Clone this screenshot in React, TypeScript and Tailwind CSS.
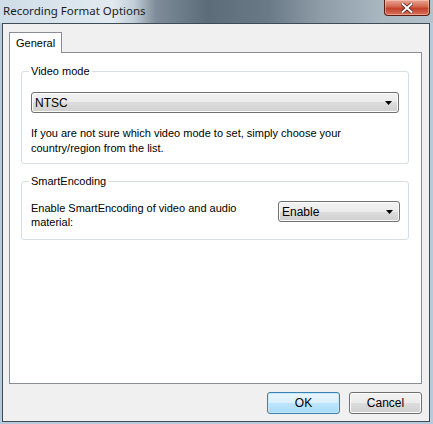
const font = { fontFamily: '"Liberation Sans", Arial, sans-serif' };

function Combo({ value, className }: { value: string; className: string }) {
  return (
    <div
      className={`h-[21px] flex items-center justify-between rounded-[3px] border border-[#707070] pl-[3px] pr-[6px] text-[12px] text-black bg-[linear-gradient(to_bottom,#f2f2f2_0%,#ebebeb_50%,#dddddd_50%,#cfcfcf_100%)] shadow-[inset_0_0_0_1px_#fcfcfc] ${className}`}
    >
      <span>{value}</span>
      <svg width="7" height="4" viewBox="0 0 7 4">
        <path d="M0 0h7L3.5 4z" fill="#000" />
      </svg>
    </div>
  );
}

function Group({ label, children, className }: { label: string; children: React.ReactNode; className?: string }) {
  return (
    <div className={`relative rounded-[3px] border border-[#d5dfe5] px-[9px] ${className ?? ''}`}>
      <span className="absolute -top-[8px] left-[7px] bg-white px-[2px] text-[11px] leading-[14px] text-black">
        {label}
      </span>
      {children}
    </div>
  );
}

export default function App() {
  return (
    <div className="w-[433px] h-[424px] flex flex-col bg-[#b6cadb] overflow-hidden" style={font}>
      {/* title bar, aero glass */}
      <div className="h-[23px] shrink-0 flex items-start justify-between bg-[linear-gradient(to_right,#cfdde8_0%,#e2eaf0_26%,#c0ccd6_31%,#7d8c98_36%,#5c6c79_48%,#6a7a87_62%,#8e9ca7_74%,#a9b7c1_88%,#b4c2cc_100%)]">
        <span className="pl-[3px] pt-[3px] text-[11.5px] leading-[15px] text-[#1b1b1b]" style={{ fontFamily: '"Noto Sans", "Open Sans", sans-serif' }}>
          Recording Format Options
        </span>
        <div className="mr-[3px] w-[46px] h-[16px] rounded-b-[4px] border border-t-0 border-[#5b1c12] bg-[linear-gradient(to_bottom,#e8a593_0%,#d3664f_45%,#c2412a_55%,#d8715a_100%)] flex items-center justify-center shadow-[inset_0_0_0_1px_rgba(255,210,200,0.5)]">
          <svg width="12" height="10" viewBox="0 0 12 10">
            <path d="M1.5 1L10.5 9M10.5 1L1.5 9" stroke="#4a1a12" strokeWidth="3.4" strokeLinecap="square" />
            <path d="M1.5 1L10.5 9M10.5 1L1.5 9" stroke="#fff" strokeWidth="2" strokeLinecap="square" />
          </svg>
        </div>
      </div>

      {/* client area */}
      <div className="ml-[2px] mr-[3px] flex-1 flex flex-col border border-[#3e4c58] bg-[#f0f0f0] pl-[6px] pr-[7px] pt-[8px]">
        <div className="flex">
          <div className="w-[53px] h-[21px] -mb-px z-10 border border-b-0 border-[#898c95] bg-white pl-[6px] pt-[3px] text-[11px] leading-[14px] text-black">
            General
          </div>
        </div>
        <div className="h-[332px] border border-[#898c95] bg-white pl-[11px] pr-[12px] pt-[18px] flex flex-col">
          <Group label="Video mode" className="h-[93px] pt-[20px]">
            <Combo value="NTSC" className="w-full" />
            <p className="mt-[13px] text-[11px] leading-[15px] text-black">
              If you are not sure which video mode to set, simply choose your
              <br />
              country/region from the list.
            </p>
          </Group>
          <Group label="SmartEncoding" className="mt-[17px] h-[59px] pt-[19px]">
            <div className="flex items-start justify-between">
              <p className="text-[11px] leading-[14px] text-black">
                Enable SmartEncoding of video and audio
                <br />
                material:
              </p>
              <Combo value="Enable" className="w-[122px] -mr-[1px]" />
            </div>
          </Group>
        </div>
        <div className="flex justify-end gap-[9px] pt-[8px]">
          <button className="w-[73px] h-[22px] rounded-[3px] border border-[#3c7fb1] text-[12px] text-black bg-[linear-gradient(to_bottom,#eaf6fd_0%,#d9f0fc_50%,#bee6fd_50%,#a7d9f5_100%)] shadow-[inset_0_0_0_1px_#c5e8fb]">
            OK
          </button>
          <button className="w-[73px] h-[22px] rounded-[3px] border border-[#707070] text-[12px] text-black bg-[linear-gradient(to_bottom,#f2f2f2_0%,#ebebeb_50%,#dddddd_50%,#cfcfcf_100%)] shadow-[inset_0_0_0_1px_#fcfcfc]">
            Cancel
          </button>
        </div>
      </div>
      <div className="h-[2px] shrink-0" />
    </div>
  );
}
